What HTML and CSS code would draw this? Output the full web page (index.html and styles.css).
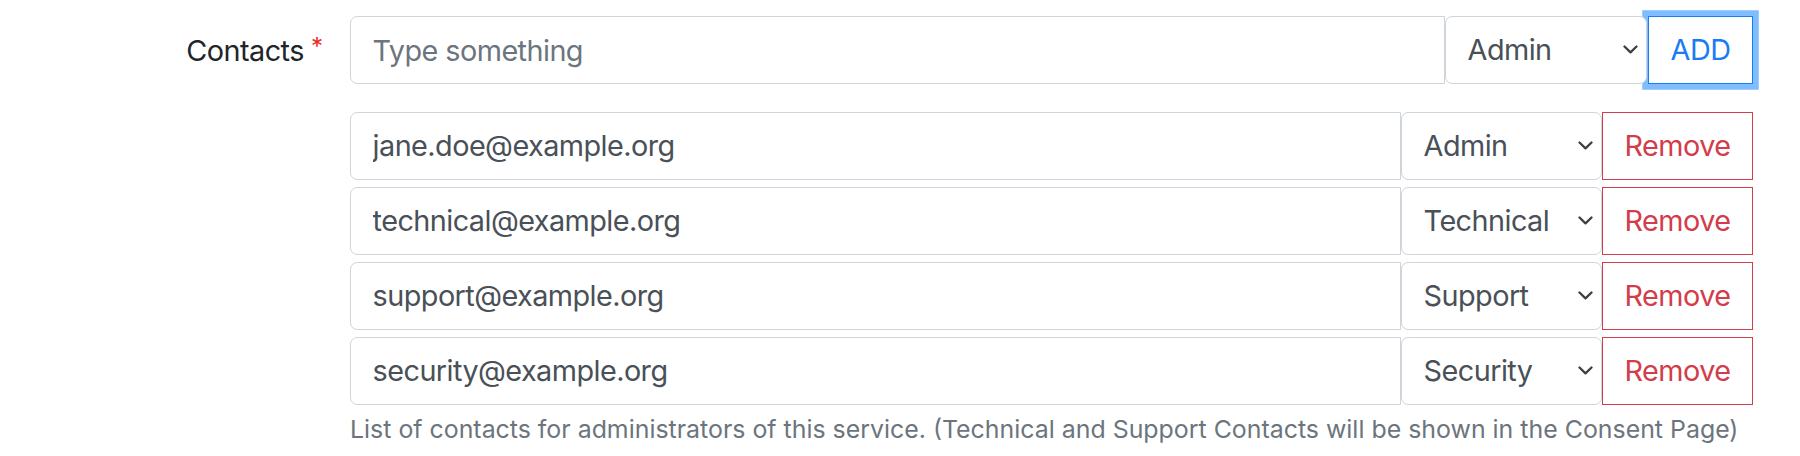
FILE: index.html
```html
<!DOCTYPE html>
<html lang="en">
<head>
<meta charset="utf-8">
<title>Contacts</title>
<link rel="stylesheet" href="styles.css">
</head>
<body>
<div class="form-group">
  <label class="label-col" for="new-contact">Contacts<span class="req">*</span></label>
  <div class="field-col">
    <div class="input-group top-group">
      <input id="new-contact" class="control text-input" type="text" placeholder="Type something">
      <span class="select-wrap top-select">
        <select class="control select"><option>Admin</option><option>Technical</option><option>Support</option><option>Security</option></select>
        <svg class="chev" width="15" height="9" viewBox="0 0 15 9"><polyline points="1.5,1.5 7.5,7.3 13.5,1.5" fill="none" stroke="#3b4045" stroke-width="2.3" stroke-linecap="round" stroke-linejoin="round"/></svg>
      </span>
      <button class="btn btn-add" type="button">ADD</button>
    </div>

    <div class="input-group row-group">
      <input class="control text-input" type="text" value="jane.doe@example.org">
      <span class="select-wrap row-select">
        <select class="control select"><option selected>Admin</option><option>Technical</option><option>Support</option><option>Security</option></select>
        <svg class="chev" width="15" height="9" viewBox="0 0 15 9"><polyline points="1.5,1.5 7.5,7.3 13.5,1.5" fill="none" stroke="#3b4045" stroke-width="2.3" stroke-linecap="round" stroke-linejoin="round"/></svg>
      </span>
      <button class="btn btn-remove" type="button">Remove</button>
    </div>

    <div class="input-group row-group">
      <input class="control text-input" type="text" value="technical@example.org">
      <span class="select-wrap row-select">
        <select class="control select"><option>Admin</option><option selected>Technical</option><option>Support</option><option>Security</option></select>
        <svg class="chev" width="15" height="9" viewBox="0 0 15 9"><polyline points="1.5,1.5 7.5,7.3 13.5,1.5" fill="none" stroke="#3b4045" stroke-width="2.3" stroke-linecap="round" stroke-linejoin="round"/></svg>
      </span>
      <button class="btn btn-remove" type="button">Remove</button>
    </div>

    <div class="input-group row-group">
      <input class="control text-input" type="text" value="support@example.org">
      <span class="select-wrap row-select">
        <select class="control select"><option>Admin</option><option>Technical</option><option selected>Support</option><option>Security</option></select>
        <svg class="chev" width="15" height="9" viewBox="0 0 15 9"><polyline points="1.5,1.5 7.5,7.3 13.5,1.5" fill="none" stroke="#3b4045" stroke-width="2.3" stroke-linecap="round" stroke-linejoin="round"/></svg>
      </span>
      <button class="btn btn-remove" type="button">Remove</button>
    </div>

    <div class="input-group row-group">
      <input class="control text-input" type="text" value="security@example.org">
      <span class="select-wrap row-select">
        <select class="control select"><option>Admin</option><option>Technical</option><option>Support</option><option selected>Security</option></select>
        <svg class="chev" width="15" height="9" viewBox="0 0 15 9"><polyline points="1.5,1.5 7.5,7.3 13.5,1.5" fill="none" stroke="#3b4045" stroke-width="2.3" stroke-linecap="round" stroke-linejoin="round"/></svg>
      </span>
      <button class="btn btn-remove" type="button">Remove</button>
    </div>

    <small class="form-text">List of contacts for administrators of this service. (Technical and Support Contacts will be shown in the Consent Page)</small>
  </div>
</div>
</body>
</html>
```

FILE: styles.css
```css
html, body {
  margin: 0;
  padding: 0;
  background: #fff;
}

body {
  font-family: Inter, "Noto Sans", sans-serif;
  font-size: 28.8px;
  line-height: 1.5;
  color: #212529;
}

.form-group {
  display: flex;
  padding-top: 16px;
  gap: 27px;
}

.label-col {
  width: 323px;
  flex: none;
  text-align: right;
  padding-top: 12.6px;
  line-height: 43.2px;
  color: #212529;
  letter-spacing: -0.5px;
  white-space: nowrap;
}

.req {
  display: inline-block;
  color: #ee2a1f;
  font-size: 24px;
  margin-left: 7px;
  letter-spacing: 0;
  vertical-align: top;
  line-height: 1;
  position: relative;
  top: 6px;
}

.field-col {
  width: 1403px;
  flex: none;
  display: flex;
  flex-direction: column;
}

.input-group {
  display: flex;
  height: 68px;
}

.top-group {
  margin-bottom: 27.5px;
}

.row-group {
  margin-bottom: 7px;
}

.control {
  box-sizing: border-box;
  height: 68px;
  margin: 0;
  font-family: inherit;
  font-size: 28.8px;
  line-height: 43.2px;
  letter-spacing: -0.55px;
  color: #495057;
  background: #fff;
  border: 1.8px solid #ced4da;
  outline: none;
}

.text-input {
  flex: 1 1 auto;
  min-width: 0;
  padding: 10.8px 21.6px;
  border-radius: 7.2px 0 0 7.2px;
}

.text-input::placeholder {
  color: #6c757d;
  opacity: 1;
}

.select-wrap {
  position: relative;
  flex: none;
  display: block;
}

.top-select {
  width: 203px;
}

.row-select {
  width: 201px;
}

.select {
  width: 100%;
  padding: 10.8px 30px 10.8px 21.6px;
  border-radius: 7.2px;
  appearance: none;
  -webkit-appearance: none;
}

.top-select .select {
  width: 202px;
}

.chev {
  position: absolute;
  top: 50%;
  right: 9px;
  margin-top: -5px;
  pointer-events: none;
}

.top-select .chev {
  right: 10px;
}

.btn {
  box-sizing: border-box;
  flex: none;
  height: 68px;
  margin: 0;
  padding: 10.8px 0;
  font-family: inherit;
  font-size: 28.8px;
  line-height: 43.2px;
  letter-spacing: -0.55px;
  text-align: center;
  background: #fff;
  border-radius: 0;
  cursor: pointer;
}

.btn-add {
  width: 105px;
  color: #1a7cf5;
  border: 1.8px solid #1a7cf5;
  box-shadow: 0 0 0 5.76px rgba(0, 123, 255, 0.5);
}

.btn-remove {
  width: 151px;
  color: #d33c4a;
  border: 1.8px solid #d33c4a;
}

.form-text {
  display: block;
  margin-top: 0.2px;
  font-size: 24.9px;
  line-height: 34.56px;
  color: #6c757d;
  white-space: nowrap;
}
```
